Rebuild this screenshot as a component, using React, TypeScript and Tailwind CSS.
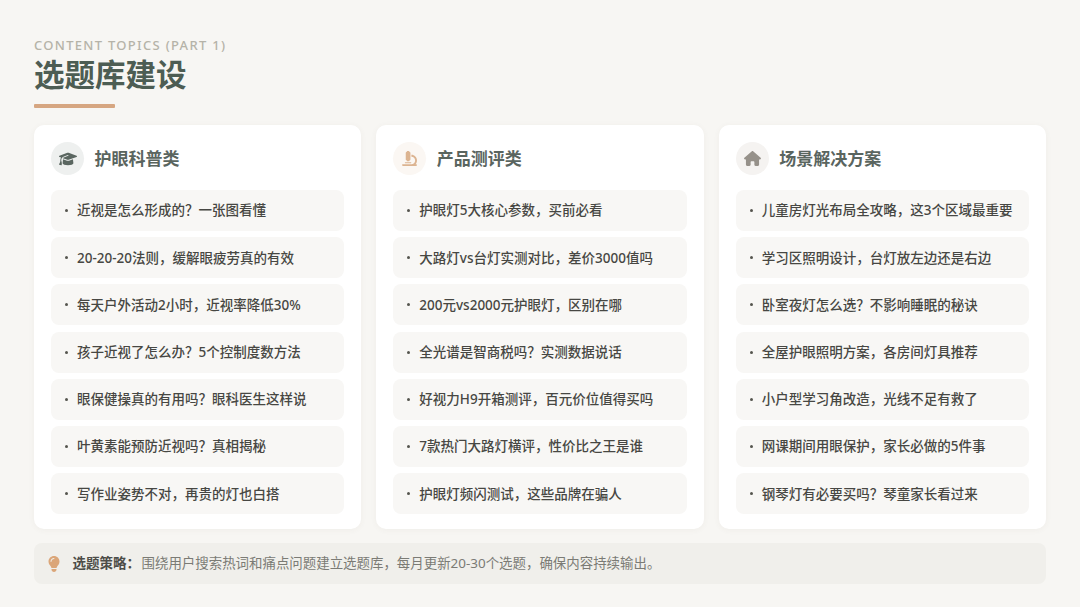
import { FaGraduationCap, FaHouse, FaLightbulb, FaMicroscope } from "react-icons/fa6";
import type { ReactNode } from "react";

type Column = {
  title: string;
  icon: ReactNode;
  iconBg: string;
  items: string[];
};

const columns: Column[] = [
  {
    title: "护眼科普类",
    icon: <FaGraduationCap className="h-[18px] w-[18px] text-[#5a6660]" />,
    iconBg: "bg-[#eef0ef]",
    items: [
      "近视是怎么形成的？一张图看懂",
      "20-20-20法则，缓解眼疲劳真的有效",
      "每天户外活动2小时，近视率降低30%",
      "孩子近视了怎么办？5个控制度数方法",
      "眼保健操真的有用吗？眼科医生这样说",
      "叶黄素能预防近视吗？真相揭秘",
      "写作业姿势不对，再贵的灯也白搭",
    ],
  },
  {
    title: "产品测评类",
    icon: <FaMicroscope className="h-[15px] w-[15px] text-[#dcb491]" />,
    iconBg: "bg-[#fbf7f3]",
    items: [
      "护眼灯5大核心参数，买前必看",
      "大路灯vs台灯实测对比，差价3000值吗",
      "200元vs2000元护眼灯，区别在哪",
      "全光谱是智商税吗？实测数据说话",
      "好视力H9开箱测评，百元价位值得买吗",
      "7款热门大路灯横评，性价比之王是谁",
      "护眼灯频闪测试，这些品牌在骗人",
    ],
  },
  {
    title: "场景解决方案",
    icon: <FaHouse className="h-[15px] w-[17px] text-[#96918a]" />,
    iconBg: "bg-[#f5f3f1]",
    items: [
      "儿童房灯光布局全攻略，这3个区域最重要",
      "学习区照明设计，台灯放左边还是右边",
      "卧室夜灯怎么选？不影响睡眠的秘诀",
      "全屋护眼照明方案，各房间灯具推荐",
      "小户型学习角改造，光线不足有救了",
      "网课期间用眼保护，家长必做的5件事",
      "钢琴灯有必要买吗？琴童家长看过来",
    ],
  },
];

function TopicCard({ column }: { column: Column }) {
  return (
    <div className="flex-1 rounded-[10px] bg-white px-[17px] pt-[17px] shadow-[0_1px_6px_rgba(90,80,60,0.05)]">
      <div className="flex h-[33px] items-center gap-[10.5px]">
        <div className={`flex h-[33px] w-[33px] items-center justify-center rounded-full ${column.iconBg}`}>
          {column.icon}
        </div>
        <h2 className="text-[17px] font-semibold text-[#5a655f]">{column.title}</h2>
      </div>
      <ul className="mt-[15px] flex flex-col gap-[6.2px]">
        {column.items.map((item) => (
          <li
            key={item}
            className="flex h-[41px] items-center gap-[9px] rounded-lg bg-[#f8f7f5] pl-[14px] text-[13.5px] font-medium text-[#474743]"
          >
            <span className="h-[3px] w-[3px] rounded-full bg-[#55554f]" />
            {item}
          </li>
        ))}
      </ul>
    </div>
  );
}

export default function App() {
  return (
    <div className="h-[607px] w-[1080px] overflow-hidden bg-[#f7f6f3] px-[34px] pt-[36px] font-['Noto_Sans','Noto_Sans_CJK_SC',sans-serif]">
      <p className="text-[13px] leading-[18px] font-medium tracking-[1.3px] text-[#b5b3a8]">CONTENT TOPICS (PART 1)</p>
      <h1 className="text-[30.5px] leading-[40px] font-bold text-[#4d5d53]">选题库建设</h1>
      <div className="mt-[10px] h-[4px] w-[81px] rounded-[1px] bg-[#d6a681]" />
      <div className="mt-[17px] flex h-[404px] gap-[15px]">
        {columns.map((column) => (
          <TopicCard key={column.title} column={column} />
        ))}
      </div>
      <div className="mt-[14px] flex h-[41px] items-center rounded-lg bg-[#f0efeb] pl-[14px] text-[13.5px] text-[#7b7b75]">
        <FaLightbulb className="h-[16px] w-[12px] text-[#dba679]" />
        <span className="ml-[12.5px] font-bold text-[#4d4d48]">选题策略：</span>
        <span className="ml-[1.5px] text-[13.45px]">围绕用户搜索热词和痛点问题建立选题库，每月更新20-30个选题，确保内容持续输出。</span>
      </div>
    </div>
  );
}
